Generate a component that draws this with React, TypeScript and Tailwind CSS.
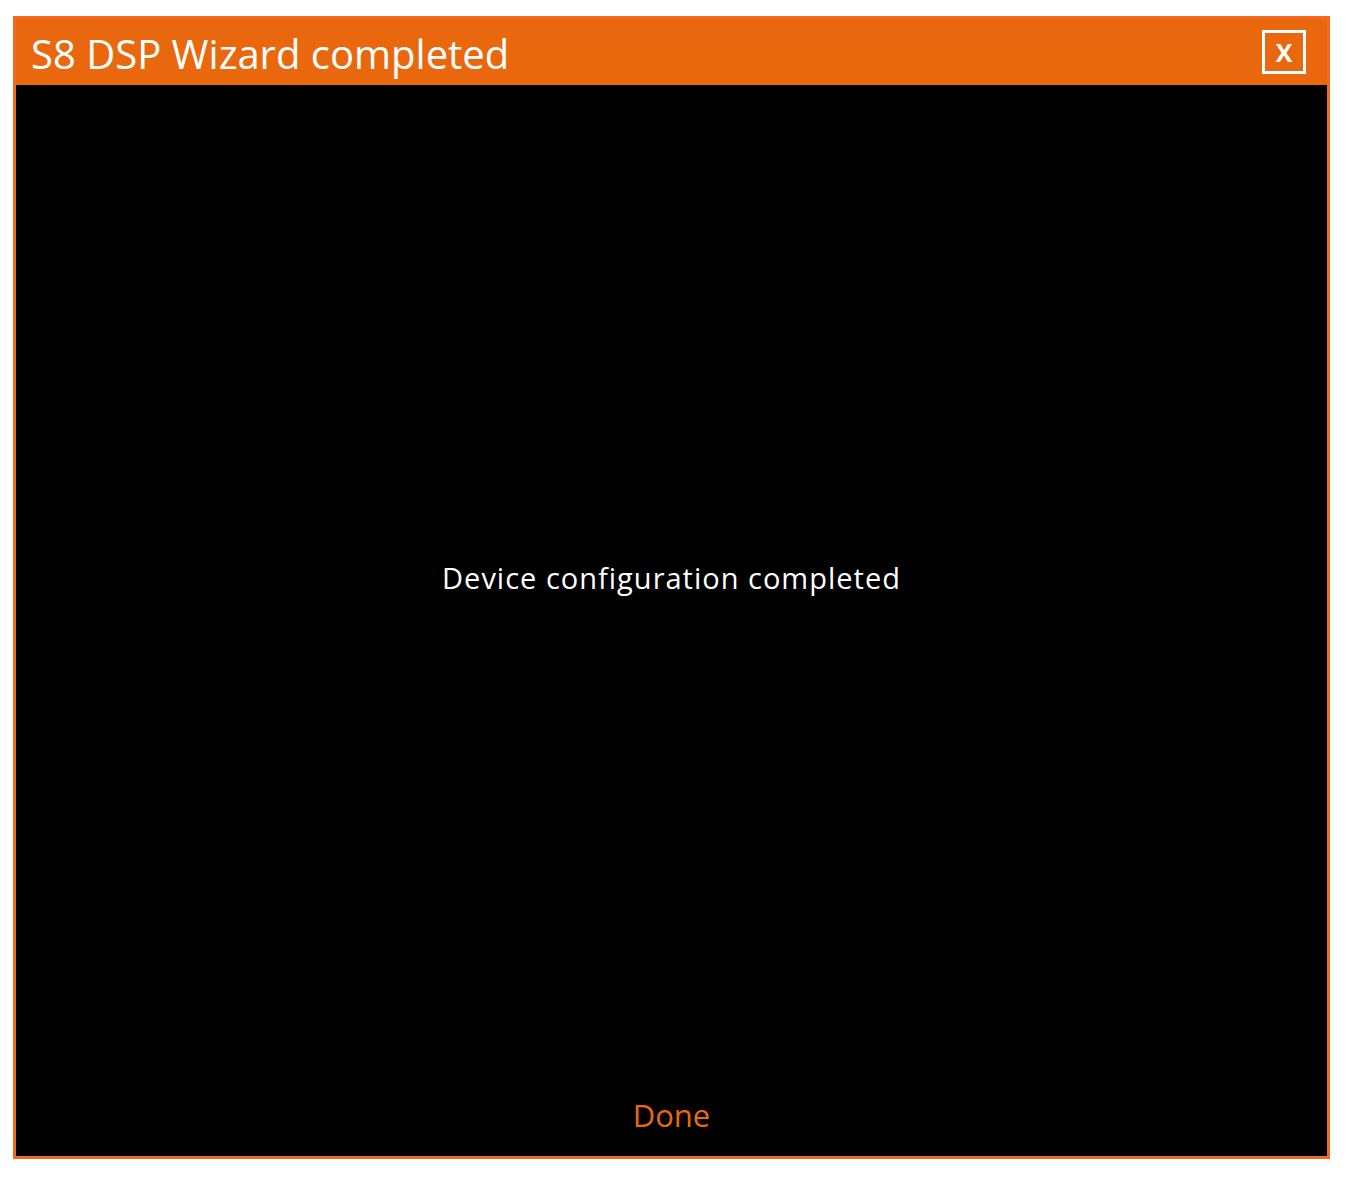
export default function App() {
  return (
    <div className="min-h-[1181px] w-full bg-white pt-4 pl-[13px]" style={{ fontFamily: '"Open Sans", "Noto Sans", sans-serif' }}>
      <div className="flex h-[1143px] w-[1317px] flex-col border-[3px] border-[#f46a1c] bg-black">
        {/* Title bar */}
        <div className="flex h-[66px] items-center justify-between bg-[#e9680d] pl-[15px] pr-[21px]">
          <span className="mt-[3px] text-[40px] leading-none text-white">S8 DSP Wizard completed</span>
          <button className="flex h-[44px] w-[44px] items-center justify-center border-[3px] border-white text-[25px] font-bold leading-none text-white">
            X
          </button>
        </div>

        {/* Body */}
        <div className="flex flex-1 flex-col items-center">
          <div className="flex flex-1 items-center justify-center pb-[30px]">
            <span className="text-[29px] tracking-[1px] text-white">Device configuration completed</span>
          </div>
          <button className="mb-[25px] text-[31px] leading-none text-[#e9680d]">Done</button>
        </div>
      </div>
    </div>
  );
}
